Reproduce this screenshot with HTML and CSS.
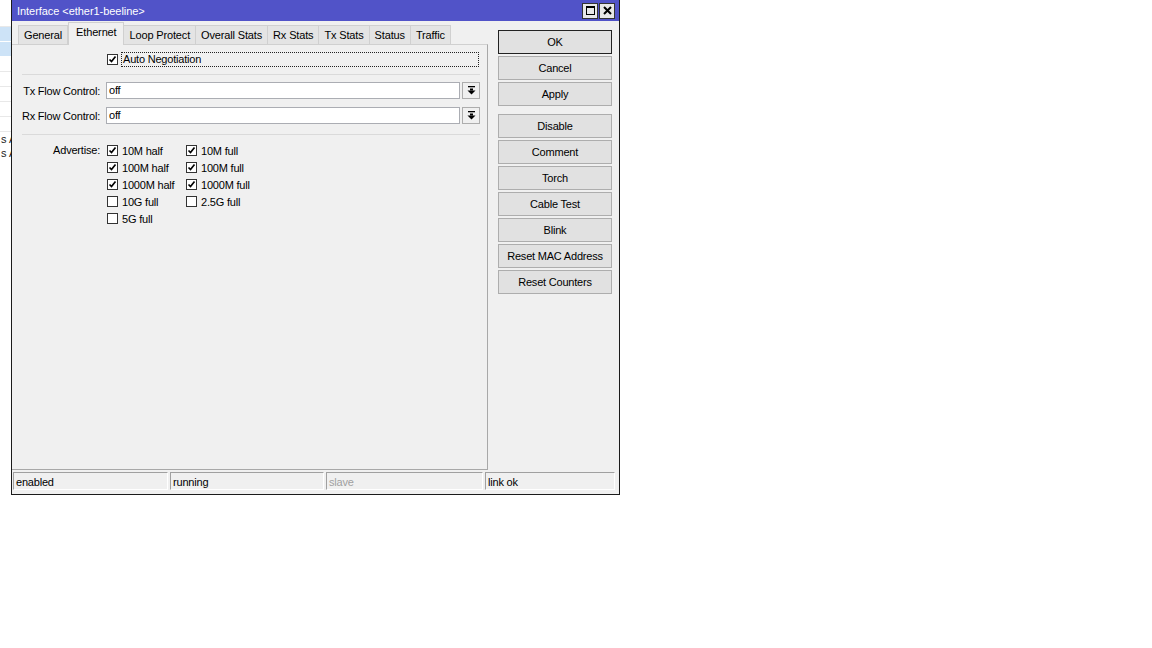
FILE: index.html
```html
<!DOCTYPE html>
<html lang="en">

<head>
  <meta charset="UTF-8" />
  <meta name="viewport" content="width=device-width, initial-scale=1.0"/>
  <title>Interface &lt;ether1-beeline&gt;</title>
  <link rel="stylesheet" href="styles.css">
</head>

<body>
  <div class="desktop">
    <!-- window behind the dialog -->
    <div class="bg-list">
      <div class="bg-row"></div>
      <div class="bg-row selected"></div>
      <div class="bg-row selected"></div>
      <div class="bg-row"></div>
      <div class="bg-row"></div>
      <div class="bg-row"></div>
      <div class="bg-row"></div>
      <div class="bg-row"></div>
      <div class="bg-row text">s A</div>
      <div class="bg-row text">s A</div>
    </div>

    <div class="dialog">
      <div class="titlebar">
        <span class="title">Interface &lt;ether1-beeline&gt;</span>
        <div class="title-btns">
          <span class="tbtn">
            <svg width="13" height="13" viewBox="0 0 13 13"><rect x="2.5" y="2.5" width="8" height="8" fill="none" stroke="#000" stroke-width="1"/><rect x="2" y="2" width="9" height="2" fill="#000"/></svg>
          </span>
          <span class="tbtn">
            <svg width="13" height="13" viewBox="0 0 13 13"><path d="M3 3 L10 10 M10 3 L3 10" stroke="#000" stroke-width="2"/></svg>
          </span>
        </div>
      </div>

      <div class="dialog-body">
        <div class="main">
          <div class="tabs">
            <div class="tab">General</div>
            <div class="tab active">Ethernet</div>
            <div class="tab">Loop Protect</div>
            <div class="tab">Overall Stats</div>
            <div class="tab">Rx Stats</div>
            <div class="tab">Tx Stats</div>
            <div class="tab">Status</div>
            <div class="tab">Traffic</div>
          </div>

          <div class="panel">
            <div class="form-row autoneg-row">
              <div class="lbl"></div>
              <span class="check on"><svg width="9" height="9" viewBox="0 0 9 9"><path d="M1.5 4.5 L3.5 6.5 L7.5 1.5" fill="none" stroke="#000" stroke-width="1.7"/></svg></span>
              <span class="focus-box">Auto Negotiation</span>
            </div>

            <div class="sep"></div>

            <div class="form-row field-row">
              <div class="lbl">Tx Flow Control:</div>
              <div class="input">off</div>
              <div class="drop-btn"><svg width="9" height="9" viewBox="0 0 9 9"><rect x="1" y="0" width="7" height="1.3" fill="#000"/><rect x="3" y="2.5" width="3" height="2" fill="#000"/><polygon points="0.5,4.5 8.5,4.5 4.5,8.5" fill="#000"/></svg></div>
            </div>

            <div class="form-row field-row second">
              <div class="lbl">Rx Flow Control:</div>
              <div class="input">off</div>
              <div class="drop-btn"><svg width="9" height="9" viewBox="0 0 9 9"><rect x="1" y="0" width="7" height="1.3" fill="#000"/><rect x="3" y="2.5" width="3" height="2" fill="#000"/><polygon points="0.5,4.5 8.5,4.5 4.5,8.5" fill="#000"/></svg></div>
            </div>

            <div class="sep sep2"></div>

            <div class="form-row advertise">
              <div class="lbl">Advertise:</div>
              <div class="adv-grid" id="advGrid"></div>
            </div>
          </div>
        </div>

        <div class="actions">
          <button class="btn default">OK</button>
          <button class="btn">Cancel</button>
          <button class="btn">Apply</button>
          <button class="btn group-start">Disable</button>
          <button class="btn">Comment</button>
          <button class="btn">Torch</button>
          <button class="btn">Cable Test</button>
          <button class="btn">Blink</button>
          <button class="btn">Reset MAC Address</button>
          <button class="btn">Reset Counters</button>
        </div>
      </div>

      <div class="statusbar">
        <div class="status-field">enabled</div>
        <div class="status-field">running</div>
        <div class="status-field muted">slave</div>
        <div class="status-field">link ok</div>
      </div>
    </div>
  </div>

  <script>
    const options = [
      ['10M half', true], ['10M full', true],
      ['100M half', true], ['100M full', true],
      ['1000M half', true], ['1000M full', true],
      ['10G full', false], ['2.5G full', false],
      ['5G full', false]
    ];

    const tick = '<svg width="9" height="9" viewBox="0 0 9 9"><path d="M1.5 4.5 L3.5 6.5 L7.5 1.5" fill="none" stroke="#000" stroke-width="1.7"/></svg>';

    const grid = document.getElementById('advGrid');
    options.forEach(([name, on]) => {
      const item = document.createElement('div');
      item.className = 'adv-item';
      item.innerHTML = `<span class="check">${on ? tick : ''}</span><span>${name}</span>`;
      grid.appendChild(item);
    });
  </script>
</body>
</html>
```

FILE: styles.css
```css
body {
  margin: 0;
  padding: 0;
  background-color: #fff;
  font-family: 'Liberation Sans', Arial, sans-serif;
  font-size: 11px;
  color: #000;
}

.desktop {
  position: relative;
  height: 648px;
}

/* list window lying under the dialog */
.bg-list {
  width: 60px;
  padding-top: 12px;
}

.bg-row {
  height: 14px;
  border-bottom: 1px solid #e8e8e8;
  white-space: nowrap;
  line-height: 14px;
  color: #222;
}

.bg-row.selected {
  background-color: #cde3f7;
  border-bottom-color: #fff;
}

.bg-row.text {
  border-bottom: none;
  padding-left: 1px;
}

.dialog {
  position: absolute;
  left: 11px;
  top: 0;
  width: 607px;
  height: 494px;
  border: 1px solid #1b1b1b;
  border-top: none;
  background-color: #f0f0f0;
  display: flex;
  flex-direction: column;
}

.titlebar {
  height: 21px;
  background-color: #5153c8;
  display: flex;
  align-items: center;
  justify-content: space-between;
  padding: 0 4px 0 5px;
}

.title {
  color: #fff;
  font-size: 11px;
  letter-spacing: -0.05px;
}

.title-btns {
  display: flex;
  gap: 1px;
}

.tbtn {
  width: 14px;
  height: 14px;
  border: 1px solid #333;
  background-color: #e8e8e8;
  display: flex;
  align-items: center;
  justify-content: center;
}

.dialog-body {
  display: flex;
  height: 449px;
}

.main {
  width: 476px;
  display: flex;
  flex-direction: column;
  padding-top: 2px;
}

.tabs {
  display: flex;
  align-items: flex-end;
  height: 21px;
  padding-left: 6px;
  position: relative;
  z-index: 1;
}

.tab {
  height: 18px;
  line-height: 18px;
  padding: 0 5px;
  border: 1px solid #d0d0d0;
  border-bottom: none;
  border-left: none;
  background-color: #e4e4e4;
  letter-spacing: -0.15px;
}

.tab:first-child {
  border-left: 1px solid #d0d0d0;
}

.tab.active {
  height: 22px;
  line-height: 19px;
  margin-bottom: -1px;
  padding: 0 7px;
  background-color: #f0f0f0;
  border-left: 1px solid #d0d0d0;
}

.panel {
  flex: 1;
  border-top: 1px solid #d0d0d0;
  border-right: 1px solid #a8a8a8;
  border-bottom: 1px solid #a8a8a8;
}

.form-row {
  display: flex;
  align-items: center;
  letter-spacing: -0.2px;
}

.lbl {
  width: 88px;
  text-align: right;
  flex-shrink: 0;
  padding-right: 6px;
}

.check {
  width: 11px;
  height: 11px;
  box-sizing: border-box;
  border: 1px solid #333;
  background-color: #fff;
  display: inline-flex;
  align-items: center;
  justify-content: center;
  flex-shrink: 0;
}

.autoneg-row {
  margin-top: 7px;
  height: 15px;
}

.autoneg-row .check {
  margin-left: 1px;
}

.focus-box {
  flex: 1;
  height: 15px;
  line-height: 13px;
  box-sizing: border-box;
  margin: 0 8px 0 3px;
  padding-left: 1px;
  border: 1px dotted #222;
}

.sep {
  margin: 7px 7px 0 10px;
  border-top: 1px solid #dadada;
}

.sep2 {
  margin-top: 10px;
}

.field-row {
  margin-top: 7px;
  height: 17px;
}

.field-row.second {
  margin-top: 8px;
}

.input {
  width: 354px;
  height: 17px;
  line-height: 15px;
  box-sizing: border-box;
  border: 1px solid #abadb3;
  background-color: #fff;
  padding-left: 2px;
}

.drop-btn {
  width: 18px;
  height: 17px;
  box-sizing: border-box;
  margin-left: 2px;
  border: 1px solid #adadad;
  background-color: #f0f0f0;
  display: flex;
  align-items: center;
  justify-content: center;
}

.advertise {
  align-items: flex-start;
  margin-top: 7px;
}

.advertise .lbl {
  line-height: 17px;
}

.adv-grid {
  display: grid;
  grid-template-columns: 79px auto;
  grid-auto-rows: 17px;
  margin-left: 1px;
}

.adv-item {
  display: flex;
  align-items: center;
  gap: 4px;
}

.actions {
  flex: 1;
  display: flex;
  flex-direction: column;
  gap: 2px;
  padding: 9px 0 0 10px;
}

.btn {
  width: 114px;
  height: 24px;
  padding: 0;
  border: 1px solid #adadad;
  background-color: #e1e1e1;
  font-family: 'Liberation Sans', Arial, sans-serif;
  font-size: 11px;
  letter-spacing: -0.2px;
  color: #000;
}

.btn.default {
  border-color: #222;
}

.btn.group-start {
  margin-top: 6px;
}

.statusbar {
  display: grid;
  grid-template-columns: 155px 154px 157px 1fr;
  column-gap: 2px;
  padding: 2px 4px 0 1px;
}

.status-field {
  height: 18px;
  line-height: 18px;
  box-sizing: border-box;
  padding-left: 2px;
  border-top: 1px solid #a0a0a0;
  border-left: 1px solid #a0a0a0;
  border-right: 1px solid #fff;
  border-bottom: 1px solid #fff;
  letter-spacing: -0.2px;
}

.status-field.muted {
  color: #a0a0a0;
}
```
